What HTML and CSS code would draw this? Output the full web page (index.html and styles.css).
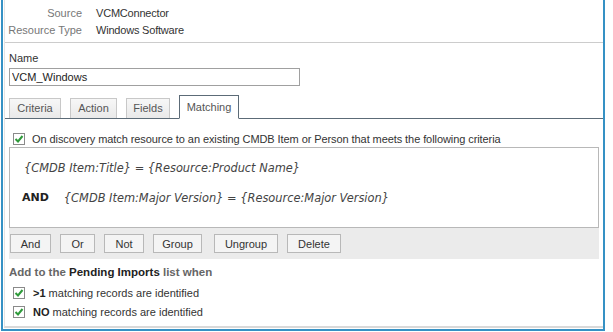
FILE: index.html
```html
<!DOCTYPE html>
<html>
<head>
<meta charset="utf-8">
<link rel="stylesheet" href="styles.css">
</head>
<body>
<div class="window">
  <div class="inner">
    <div class="meta">
      <div class="lbl">Source</div><div class="val">VCMConnector</div>
      <div class="lbl">Resource Type</div><div class="val">Windows Software</div>
    </div>
    <div class="name-sec">
      <div class="name-lbl">Name</div>
      <input class="name-input" type="text" value="VCM_Windows">
    </div>
    <div class="tabs">
      <div class="tab t-criteria">Criteria</div>
      <div class="tab t-action">Action</div>
      <div class="tab t-fields">Fields</div>
      <div class="tab t-matching active">Matching</div>
    </div>
    <div class="panel">
      <div class="check-row main-check">
        <span class="cb"><svg width="10" height="10" viewBox="0 0 10 10"><path d="M1.5 5 L4 7.5 L8.5 2" fill="none" stroke="#2e9a3a" stroke-width="2"/></svg></span>
        <span class="main-text">On discovery match resource to an existing CMDB Item or Person that meets the following criteria</span>
      </div>
      <div class="criteria">
        <div class="crit-line first">{CMDB Item:Title} = {Resource:Product Name}</div>
        <div class="crit-line and-line"><b class="op">AND</b><span>{CMDB Item:Major Version} = {Resource:Major Version}</span></div>
      </div>
      <div class="btn-row">
        <button class="btn b-and">And</button>
        <button class="btn b-or">Or</button>
        <button class="btn b-not">Not</button>
        <button class="btn b-group">Group</button>
        <button class="btn b-ungroup">Ungroup</button>
        <button class="btn b-delete">Delete</button>
      </div>
      <div class="pending-title">Add to the <b class="dark">Pending Imports</b> list when</div>
      <div class="check-row sub-check first-sub">
        <span class="cb"><svg width="10" height="10" viewBox="0 0 10 10"><path d="M1.5 5 L4 7.5 L8.5 2" fill="none" stroke="#2e9a3a" stroke-width="2"/></svg></span>
        <span><b class="dark">&gt;1</b> matching records are identified</span>
      </div>
      <div class="check-row sub-check">
        <span class="cb"><svg width="10" height="10" viewBox="0 0 10 10"><path d="M1.5 5 L4 7.5 L8.5 2" fill="none" stroke="#2e9a3a" stroke-width="2"/></svg></span>
        <span><b class="dark">NO</b> matching records are identified</span>
      </div>
    </div>
  </div>
</div>
</body>
</html>
```
FILE: styles.css
```css
html, body {
  margin: 0;
  padding: 0;
  background: #ffffff;
}
body {
  font-family: "Liberation Sans", Arial, sans-serif;
  font-size: 11px;
  color: #333;
  width: 613px;
  height: 332px;
  overflow: hidden;
}
.window {
  margin-left: 1px;
  width: 600px;
  height: 329px;
  border-left: 2px solid #3591c4;
  border-right: 2px solid #3591c4;
  border-bottom: 2px solid #3591c4;
}
.inner {
  height: 326px;
  border-bottom: 2px solid #d9d9d9;
  border-left: 1px solid #e4e4e4;
  margin-left: 1px;
}
.meta {
  display: grid;
  grid-template-columns: 77px auto;
  grid-auto-rows: 17px;
  column-gap: 14px;
  padding-top: 5px;
  height: 37px;
  border-bottom: 1px solid #cccccc;
  line-height: 17px;
  white-space: nowrap;
}
.lbl {
  text-align: right;
  color: #777;
}
.val {
  color: #333;
  letter-spacing: -0.2px;
}
.name-sec {
  padding: 8px 0 0 4px;
  height: 44px;
}
.name-lbl {
  line-height: 14px;
  color: #333;
}
.name-input {
  display: block;
  box-sizing: border-box;
  margin: 3px 0 0 0;
  width: 291px;
  height: 18px;
  border: 1px solid #a0a0a0;
  padding: 0 2px;
  font-family: "Liberation Sans", Arial, sans-serif;
  font-size: 11px;
  color: #222;
  outline: none;
}
.tabs {
  display: flex;
  align-items: flex-end;
  gap: 9px;
  padding-left: 4px;
  border-bottom: 1px solid #5c6b77;
  height: 23px;
}
.tab {
  box-sizing: border-box;
  height: 20px;
  line-height: 18px;
  text-align: center;
  border: 1px solid #c8c8c8;
  border-bottom: none;
  background: linear-gradient(#f7f7f7, #e9e9e9);
  color: #555;
}
.t-criteria { width: 52px; }
.t-action { width: 47px; }
.t-fields { width: 44px; }
.t-matching { width: 60px; }
.tab.active {
  height: 24px;
  line-height: 22px;
  background: #fff;
  border: 1px solid #5c6b77;
  border-bottom: 1px solid #fff;
  margin-bottom: -1px;
}
.panel {
  padding: 0 0 0 4px;
}
.check-row {
  display: flex;
  align-items: center;
  gap: 7px;
}
.main-check {
  box-sizing: border-box;
  height: 28px;
  padding-left: 4px;
  padding-top: 12px;
}
.main-text {
  letter-spacing: -0.08px;
}
.cb {
  box-sizing: border-box;
  width: 12px;
  height: 12px;
  border: 1px solid #8a8a8a;
  background: #fff;
  display: flex;
  align-items: center;
  justify-content: center;
  flex: none;
}
.criteria {
  box-sizing: border-box;
  width: 590px;
  height: 81px;
  border: 1px solid #b8b8b8;
  padding: 13px 0 0 14px;
  font-family: "DejaVu Sans", Verdana, sans-serif;
  font-style: italic;
  font-size: 11.4px;
  color: #444;
}
.crit-line {
  line-height: 14px;
  white-space: nowrap;
}
.and-line {
  margin-top: 16px;
  margin-left: -2px;
  display: flex;
  gap: 15px;
}
.op {
  font-style: normal;
  font-weight: bold;
  font-size: 11px;
  color: #222;
}
.btn-row {
  width: 590px;
  height: 31px;
  box-sizing: border-box;
  background: #ebebeb;
  display: flex;
  align-items: center;
  gap: 9px;
  padding-left: 1px;
}
.btn {
  height: 19px;
  box-sizing: border-box;
  border: 1px solid #b8b8b8;
  background: #f4f4f4;
  font-family: "Liberation Sans", Arial, sans-serif;
  font-size: 11px;
  color: #333;
  padding: 0;
}
.b-and { width: 41px; }
.b-or { width: 35px; }
.b-not { width: 40px; }
.b-group { width: 49px; }
.b-ungroup { width: 64px; margin-left: 3px; }
.b-delete { width: 54px; }
.pending-title {
  margin-top: 5px;
  line-height: 16px;
  font-weight: bold;
  color: #666;
  font-size: 11.5px;
}
.dark {
  color: #222;
}
.sub-check {
  height: 19px;
  padding-left: 4px;
  gap: 8px;
}
.first-sub {
  margin-top: 3px;
}
```
